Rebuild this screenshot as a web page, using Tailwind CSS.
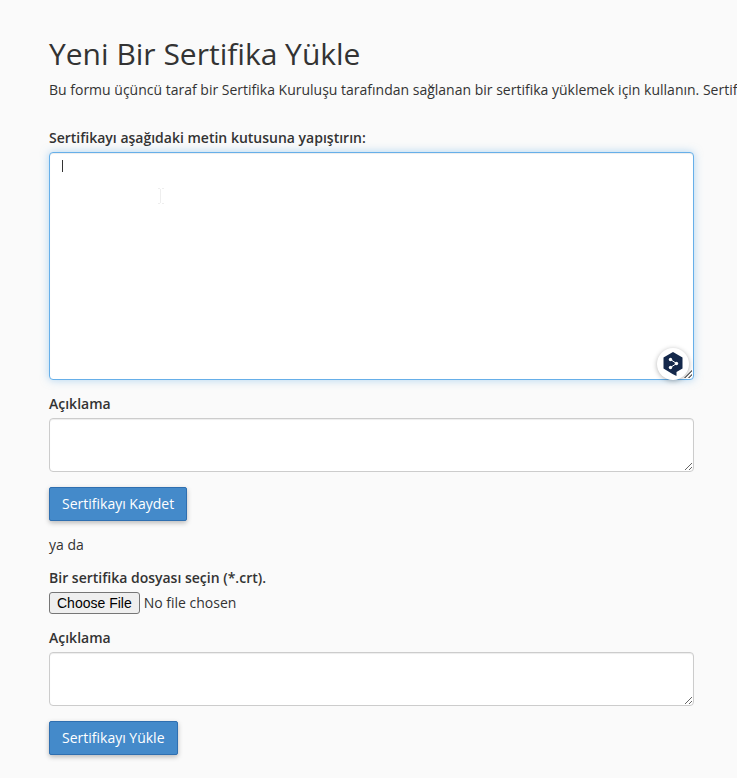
<!DOCTYPE html>
<html lang="tr">
<head>
    <meta charset="UTF-8">
    <meta name="viewport" content="width=device-width, initial-scale=1.0">
    <title>Yeni Bir Sertifika Yükle</title>
    <script src="https://cdn.jsdelivr.net/npm/@tailwindcss/browser@4"></script>
</head>
<body class="min-h-screen overflow-x-hidden bg-[#fafafa] font-['Open_Sans',sans-serif] text-sm/5 text-[#333333]">
    <main class="pt-[38px] pr-[43px] pb-6 pl-[49px]">
        <h1 class="text-[30px]/8">Yeni Bir Sertifika Yükle</h1>
        <p class="mt-2.5 whitespace-nowrap">Bu formu üçüncü taraf bir Sertifika Kuruluşu tarafından sağlanan bir sertifika yüklemek için kullanın. Sertifika</p>

        <!-- Paste the certificate -->
        <form class="mt-7">
            <label for="certificate" class="block font-semibold">Sertifikayı aşağıdaki metin kutusuna yapıştırın:</label>
            <div class="relative mt-1">
                <textarea id="certificate" class="block h-[228px] w-full resize rounded border border-[#66afe9] bg-white px-3 py-1.5 caret-transparent shadow-[inset_0_1px_1px_rgba(0,0,0,0.075),0_0_8px_rgba(102,175,233,0.5)] outline-none"></textarea>
                <!-- Text caret and mouse pointer -->
                <span class="absolute top-2 left-[13px] h-3 w-px bg-[#333333]" aria-hidden="true"></span>
                <svg class="absolute top-9 left-27 h-4 w-2" viewBox="0 0 8 16" fill="none" stroke="#eeeeee" aria-hidden="true">
                    <path d="M1 .5h2M5 .5h2M3.500 1v14M1 15.500h2M5 15.500h2" />
                </svg>
                <!-- Translator badge -->
                <button type="button" aria-label="DeepL" class="absolute right-[5px] bottom-0 flex size-8 items-center justify-center rounded-full bg-white shadow-[0_1px_5px_rgba(0,0,0,0.3)]">
                    <svg class="h-6 w-5" viewBox="0 0 20 24">
                        <path d="M10 0 19.500 5.500V16.500L13.500 20V24L9.500 22 .5 16.500V5.500Z" fill="#14284b" />
                        <path d="M7.500 7.500 13.500 11.500 7.500 15.500" fill="none" stroke="#fff" stroke-width="1" />
                        <circle cx="7.500" cy="7.500" r="1.700" fill="#fff" />
                        <circle cx="13.500" cy="11.500" r="1.700" fill="#fff" />
                        <circle cx="7.500" cy="15.500" r="1.700" fill="#fff" />
                    </svg>
                </button>
                <!-- Resize grip stays visible beside the badge -->
                <svg class="pointer-events-none absolute right-0.5 bottom-0.5 size-2" viewBox="0 0 8 8" stroke="#888" aria-hidden="true">
                    <path d="M0 8 8 0M4 8 8 4" />
                </svg>
            </div>

            <label for="description" class="mt-3.5 block font-semibold">Açıklama</label>
            <textarea id="description" class="mt-1 block h-[54px] w-full resize rounded border border-[#cccccc] bg-white px-3 py-1.5 shadow-[inset_0_1px_1px_rgba(0,0,0,0.075)]"></textarea>

            <button type="button" class="mt-[15px] block h-[34px] rounded-xs border border-[#2f6fb0] bg-[#448aca] px-3 text-white shadow-[0_2px_5px_rgba(0,0,0,0.26)] hover:bg-[#3276b1]">Sertifikayı Kaydet</button>
        </form>

        <p class="mt-3.5">ya da</p>

        <!-- Upload a certificate file -->
        <form class="mt-[13px]">
            <label for="certificate-file" class="block font-semibold">Bir sertifika dosyası seçin (*.crt).</label>
            <input type="file" id="certificate-file" lang="en" class="mt-1 block h-[22px] w-full text-sm/5 file:mr-1 file:h-[22px] file:rounded-[3px] file:border file:border-solid file:border-[#767676] file:bg-[#efefef] file:px-[7px] file:font-['Liberation_Sans',sans-serif] file:text-sm/5 file:text-black">

            <label for="file-description" class="mt-3.5 block font-semibold">Açıklama</label>
            <textarea id="file-description" class="mt-1 block h-[54px] w-full resize rounded border border-[#cccccc] bg-white px-3 py-1.5 shadow-[inset_0_1px_1px_rgba(0,0,0,0.075)]"></textarea>

            <button type="button" class="mt-[15px] block h-[34px] rounded-xs border border-[#2f6fb0] bg-[#448aca] px-3 text-white shadow-[0_2px_5px_rgba(0,0,0,0.26)] hover:bg-[#3276b1]">Sertifikayı Yükle</button>
        </form>
    </main>
</body>
</html>
